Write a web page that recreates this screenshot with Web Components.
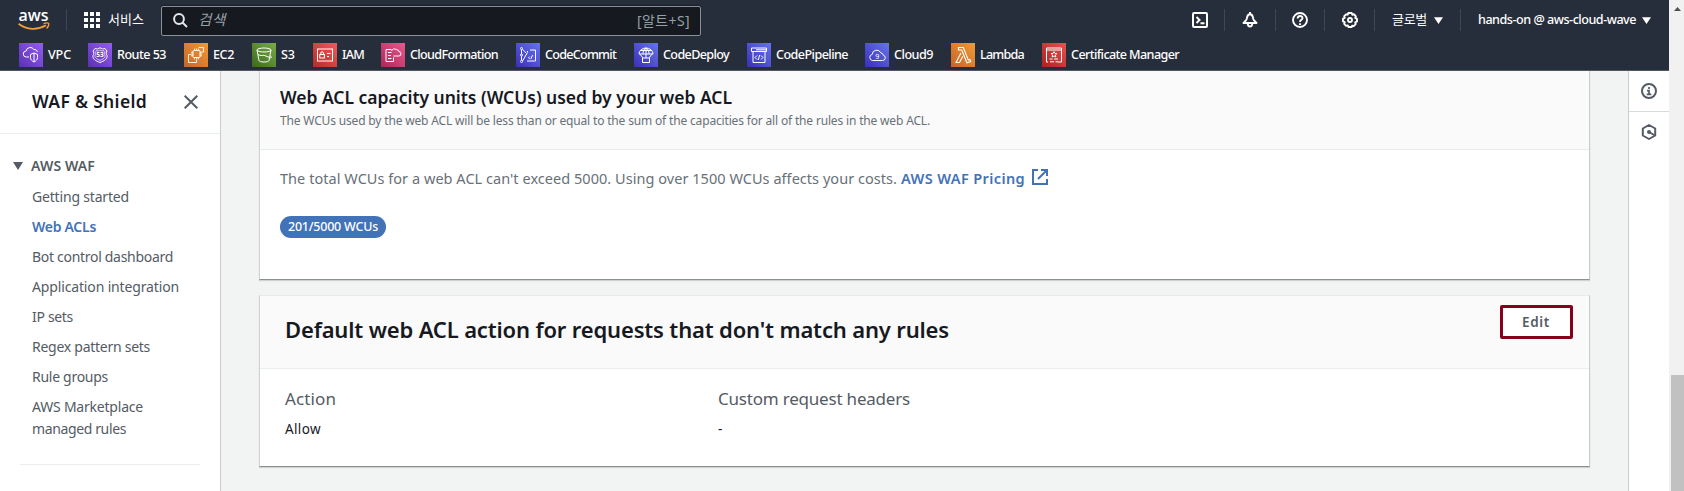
<!DOCTYPE html>
<html lang="ko">
<head>
<meta charset="utf-8">
<title>WAF &amp; Shield</title>
<style>
html,body{margin:0;height:100%;overflow:hidden}
body{font-family:"Noto Sans","Noto Sans CJK KR",sans-serif;color:#16191f}
</style>
</head>
<body>
<console-app></console-app>
<script>
const define=(name,html,setup)=>{
  const t=document.createElement('template');
  t.innerHTML=html;
  customElements.define(name,class extends HTMLElement{
    constructor(){super();this.attachShadow({mode:'open'}).append(t.content.cloneNode(true));}
    connectedCallback(){if(setup)setup(this,this.shadowRoot);}
  });
};

/* One line of text tracked to a set width. */
define('fit-text',`<style>:host{display:inline-block;white-space:nowrap;vertical-align:top;flex:none}span{display:inline-block;font-kerning:normal}</style><span><slot></slot></span>`,(el,r)=>{
  const w=+el.getAttribute('w'),s=r.querySelector('span');
  el.style.fontSize=(el.getAttribute('size')||14)+'px';
  el.style.lineHeight=(el.getAttribute('lh')||20)+'px';
  el.style.fontWeight=el.getAttribute('weight')||400;
  const n=[...el.textContent].length;
  s.style.letterSpacing=((w-s.getBoundingClientRect().width)/Math.max(1,n))+'px';
  el.style.width=w+'px';
});

const ICONS={
 vpc:['#5a30b5','#945df2','<path d="M10 14H7.5a3 3 0 0 1-.4-6 4.2 4.2 0 0 1 7.8-1.400 2.600 2.600 0 0 1 3.400 2.400M15 10l3.500 1.400v3.200c0 2-1.400 3.300-3.500 4.400-2.100-1.100-3.500-2.400-3.500-4.400v-3.200zM15 10v9"/>'],
 route:['#5a30b5','#945df2','<path d="M7 5.500c1.700.6 3.300.5 5-.8 1.700 1.300 3.300 1.400 5 .8l2 2.500c-.9 1.700-.9 2.900 0 4.500.7 3.500-2.500 5.300-7 7-4.500-1.700-7.700-3.500-7-7 .9-1.600.9-2.800 0-4.500z"/><path d="M8 7.700c1.500.4 2.800.2 4-.8 1.200 1 2.500 1.200 4 .8l1 1c-.5 1.300-.5 2.600 0 4 .4 2-1.800 3.300-5 4.700-3.200-1.400-5.400-2.700-5-4.700.5-1.400.5-2.700 0-4z" stroke-width=".7"/><text x="12" y="14.400" text-anchor="middle" font-size="6.500" font-weight="700" fill="#fff" stroke="none">53</text>'],
 ec2:['#c86427','#f09a36','<rect x="9" y="7.500" width="7" height="7" rx=".8"/><path d="M10.700 5.500v2m1.800-2v2m1.800-2v2m-3.600 7v2m1.800-2v2m1.800-2v2M7 9.200h2M7 11h2m-2 1.800h2m7-3.600h2M16 11h2m-2 1.800h2M7 11.500H4.500v8h8V17M15 5V4.500h4.500V9H18" stroke-width=".9"/>'],
 s3:['#3a691d','#7aac49','<ellipse cx="12" cy="7" rx="7" ry="2"/><path d="M5 7l2 10.500c.2 2 9.800 2 10 0L19 7M12 12.300l6.500 2.500c1 .3 1.600-.8-.3-2.100M6 11.500c2 1.300 4 1 6 .8"/>'],
 iam:['#b52b2a','#ef5c55','<rect x="4.500" y="6" width="15" height="12"/><rect x="6.800" y="11.500" width="4.600" height="3.500"/><path d="M7.800 11.500V10a1.300 1.300 0 0 1 2.600 0v1.500M14 10.500h3.500M14 13.500h2"/>'],
 cfn:['#b02558','#e7598d','<path d="M10.500 6.500H5v12h7.500v-4M7 9.500h3.500M7 12.500h3M7 15.500h3.500M12.500 13h5.200a2.200 2.200 0 0 0 .2-4.400 2.400 2.400 0 0 0-2.600-2 3 3 0 0 0-4.800 1.400"/>'],
 commit:['#3b2fb5','#6574f0','<circle cx="5.500" cy="5.500" r="1"/><circle cx="5.500" cy="12" r="1"/><circle cx="5.500" cy="18.500" r="1"/><path d="M5.500 6.500V11m0 2v4.500M6.500 6.200l4 4.300M6.500 18l5-8.500M11 8.500h1m2-1.500h5.500v11H11M13.800 13.500l-1.300 1.300 1.300 1.300m2.800-4-1.800 4"/>'],
 deploy:['#3b2fb5','#6574f0','<path d="M5 11a7 6 0 0 1 14 0zM12 5v6M9 11c0-3 .8-5 3-6 2.200 1 3 3 3 6M6.500 7.500h11M6 11.200l3 3.800m9-3.800L15 15M12 11v4M8.500 15h7v4.500h-7z"/>'],
 pipe:['#3b2fb5','#6574f0','<path d="M4.500 5h15v3.500h-15zM9 6.800h10M6 8.500v11h12v-11M10 12.500l-2 2 2 2m4-4 2 2-2 2m-1.300-4.500-1.500 5"/>'],
 c9:['#3b2fb5','#6574f0','<path d="M7.500 17.500a3.100 3.100 0 0 1-.3-6.100 4.500 4.500 0 0 1 8.600-1.600 3 3 0 0 1 2.500 2.400 2.700 2.700 0 0 1-.8 5.300z"/><text x="12.200" y="15.800" text-anchor="middle" font-size="7" fill="#fff" stroke="none">9</text>'],
 lambda:['#c86427','#f09a36','<path d="M7.500 4.500h4.800l5 12.500 1.500-.6.900 2.200-3.800 1.200L10.700 7H7.500zM10 10 5 19.500h3.500l3.300-6.300" stroke-width="1.100"/>'],
 cert:['#a82322','#e8524f','<path d="M4.500 5h15v14h-3.500M4.500 5v14H6M4.500 7h15M7.500 16h3m1.500 0h4M8 18.800h4m1.500 0H16"/><path d="M12 8.600l.9 1.800 2 .2-1.500 1.400.5 2-1.900-1-1.900 1 .5-2-1.500-1.400 2-.2z"/>']
};
let gid=0;
define('service-icon',`<style>:host{display:block;width:24px;height:24px;flex:none}svg{display:block}</style>`,(el,r)=>{
  const [a,b,p]=ICONS[el.getAttribute('name')],id='g'+gid++;
  const d=document.createElement('div');
  d.innerHTML=`<svg width="24" height="24" fill="none" stroke="#fff"><defs><linearGradient id="${id}" x1="0" y1="1" x2="1" y2="0"><stop stop-color="${a}"/><stop offset="1" stop-color="${b}"/></linearGradient></defs><rect width="24" height="24" fill="url(#${id})" stroke="none"/>${p}</svg>`;
  r.append(d);
});

customElements.define('service-item',class extends HTMLElement{
  constructor(){super();this.attachShadow({mode:'open'});}
  connectedCallback(){
    this.shadowRoot.innerHTML=`<style>:host{display:flex;gap:5px;color:#fff;height:24px;flex:none;box-sizing:border-box;width:${this.getAttribute('w')}px}</style><service-icon name="${this.getAttribute('icon')}"></service-icon><fit-text w="${this.getAttribute('tw')}" size="12.600" lh="24" weight="500">${this.getAttribute('label')}</fit-text>`;
  }
});

define('nav-sep',`<style>:host{display:block;width:1px;height:22px;background:#414750;flex:none}</style>`);
define('down-caret',`<style>:host{display:block;flex:none}svg{display:block}</style><svg width="9" height="7" fill="currentColor"><path d="M0 .3h9L4.500 7z"/></svg>`);

define('search-box',`<style>:host{display:flex;box-sizing:border-box;width:540px;height:30px;border:1px solid #879196;border-radius:2px;background:#16191f;color:#95a0a6;align-items:center;padding:0 10px 0 11px;box-shadow:0 -1px 1px #1b212b;flex:none;margin-top:2px}svg{margin:-1px 10px 0 0;display:block}.h{font-style:italic;flex:1;margin-top:-2px}</style>
<svg width="15" height="15" fill="none" stroke="#e4e7e9" stroke-width="2"><circle cx="6" cy="6" r="4.900"/><path d="M9.500 9.500 14 14"/></svg><div class="h"><fit-text w="28" size="14.500" lh="20">검색</fit-text></div><fit-text w="53" size="14" lh="20" style="margin-top:-1px">[알트+S]</fit-text>`);

define('top-nav',`<style>
:host{display:block;height:71px;box-sizing:border-box;background:#272e3b;border-bottom:1px solid #545664;color:#fff}
.r{display:flex;height:40px;align-items:center;width:1669px;box-sizing:border-box;padding-left:18px}
.f{display:flex;padding:3px 0 0 19px}
svg{display:block;flex:none}.push{margin-left:auto}
</style>
<div class="r">
<svg width="32" height="34"><text x="0.500" y="18" font-family="Open Sans,Noto Sans,sans-serif" font-weight="600" font-size="17" textLength="30" lengthAdjust="spacingAndGlyphs" fill="#fff">aws</text><path d="M.5 20.800c8.500 6.500 19 6.500 27.500 1.500" fill="none" stroke="#f19d38" stroke-width="1.900"/><path d="M25.500 20.700c2-.8 4.500-.9 5-.3.400.8-.3 3.300-1.900 5" fill="none" stroke="#f19d38" stroke-width="1.400"/></svg>
<nav-sep style="margin-left:16px"></nav-sep>
<svg width="16" height="16" fill="#fff" style="margin-left:17px"><path d="M0 0h4v4H0zM6 0h4v4H6zM12 0h4v4h-4zM0 6h4v4H0zM6 6h4v4H6zM12 6h4v4h-4zM0 12h4v4H0zM6 12h4v4H6zM12 12h4v4h-4z"/></svg>
<fit-text w="36" size="13" lh="20" style="margin:-3px 17px 0 8px">서비스</fit-text>
<search-box></search-box>
<svg class="push" width="16" height="16" fill="none" stroke="#fff" stroke-width="2"><rect x="1" y="1" width="14" height="14" rx="1"/><path d="M4.500 5l3 3-3 3M8.500 11.300h4"/></svg>
<nav-sep style="margin-left:16px"></nav-sep>
<svg style="margin-left:17px" width="16" height="16" fill="none" stroke="#fff" stroke-width="1.900" stroke-linejoin="round"><path d="M8 2.300C5 2.300 5.300 5 4.700 7c-.5 1.500-1.800 2.400-3.200 4h13c-1.400-1.600-2.700-2.500-3.200-4C10.700 5 11 2.300 8 2.300zM5.700 11.500c.2 4 4.400 4 4.600 0M8 0v2.500"/></svg>
<nav-sep style="margin-left:17px"></nav-sep>
<svg style="margin-left:16px" width="16" height="16" fill="none" stroke="#fff" stroke-width="1.900"><circle cx="8" cy="8" r="7"/><path d="M5.600 6.500C5.600 3 10.600 3.300 10.500 6.200 10.400 8 8 7.700 8 10M8 11.200v1.700"/></svg>
<nav-sep style="margin-left:16px"></nav-sep>
<svg style="margin-left:17px" width="16" height="16" fill="none" stroke="#fff" stroke-width="1.900" stroke-linejoin="round"><path d="M6.300 1h3.400l.6 1.700 1.800-.4 1.800 2.100-.7 1.500 1.800 1v2.500l-1.800 1 .5 1.700-2 2-1.500-.4L9.600 15H6.400l-.6-1.600-1.700.4-1.900-2 .5-1.600L1 9.400V6.700l1.700-.9-.5-1.600L4.100 2.300l1.600.4z"/><circle cx="8" cy="8" r="2"/></svg>
<nav-sep style="margin-left:16px"></nav-sep>
<fit-text w="35" size="13" lh="20" style="margin:-3px 7px 0 17px">글로벌</fit-text><down-caret></down-caret>
<nav-sep style="margin:0 17px"></nav-sep>
<fit-text w="158" size="12.600" lh="20" weight="500" style="margin-right:6px">hands-on @ aws-cloud-wave</fit-text><down-caret style="margin-right:18px"></down-caret>
</div>
<div class="f">
<service-item icon="vpc" label="VPC" tw="23" w="69"></service-item><service-item icon="route" label="Route 53" tw="49" w="96"></service-item><service-item icon="ec2" label="EC2" tw="21" w="68"></service-item><service-item icon="s3" label="S3" tw="14" w="61"></service-item><service-item icon="iam" label="IAM" tw="22" w="68"></service-item><service-item icon="cfn" label="CloudFormation" tw="88" w="135"></service-item><service-item icon="commit" label="CodeCommit" tw="71" w="118"></service-item><service-item icon="deploy" label="CodeDeploy" tw="66" w="113"></service-item><service-item icon="pipe" label="CodePipeline" tw="72" w="118"></service-item><service-item icon="c9" label="Cloud9" tw="39" w="86"></service-item><service-item icon="lambda" label="Lambda" tw="44" w="91"></service-item><service-item icon="cert" label="Certificate Manager" tw="108" w="140"></service-item>
</div>`);

define('side-nav',`<style>
:host{display:block;width:220px;flex:none;background:#fff;border-right:1px solid #ccc;color:#545b64;box-sizing:content-box}
header{display:flex;align-items:flex-start;border-bottom:1px solid #eaeded;box-sizing:border-box;height:63px;padding:17px 0 0 32px;color:#16191f}
header svg{margin:7px 0 0 37px}
.g{display:flex;align-items:center;padding:22px 0 0 13px;height:20px}.g fit-text{margin-left:8px}
ul{list-style:none;margin:0;padding:10px 0 0 32px}li{height:30px;line-height:22px}li.on{color:#4272b8}li.two{height:52px}li fit-text{display:block}
hr{border:0;height:1px;background:#eaeded;margin:16px 20px 0}
</style>
<header><fit-text w="115" size="17.500" lh="26" weight="600">WAF &amp; Shield</fit-text><svg width="14" height="14" fill="none" stroke="#545b64" stroke-width="2"><path d="M.7.700l12.600 12.600M13.300.7.700 13.300"/></svg></header>
<div class="g"><svg width="10" height="8" fill="#545b64"><path d="M0 0h10L5 8z"/></svg><fit-text w="64" size="14" weight="600">AWS WAF</fit-text></div>
<ul><li><fit-text w="97" lh="22">Getting started</fit-text></li><li class="on"><fit-text w="64" lh="22" weight="600">Web ACLs</fit-text></li><li><fit-text w="141" lh="22">Bot control dashboard</fit-text></li><li><fit-text w="147" lh="22">Application integration</fit-text></li><li><fit-text w="41" lh="22">IP sets</fit-text></li><li><fit-text w="118" lh="22">Regex pattern sets</fit-text></li><li><fit-text w="76" lh="22">Rule groups</fit-text></li><li class="two"><fit-text w="111" lh="22">AWS Marketplace</fit-text><fit-text w="94" lh="22">managed rules</fit-text></li></ul><hr>`);

define('info-card',`<style>
:host{display:block;box-sizing:border-box;background:#fff;border-left:1px solid #d0d4d5;border-right:1px solid #c8cccd;border-bottom:1px solid #8b9093;box-shadow:0 1px 1px #cfd2d3}
.head{background:#fafafa;border-bottom:1px solid #eaeded;box-sizing:border-box;display:flex;justify-content:space-between}
</style><div class="head"><slot name="head"></slot></div><slot></slot>`,(el,r)=>{r.querySelector('.head').style.height=el.getAttribute('head')+'px';});

define('status-badge',`<style>:host{display:block;box-sizing:border-box;width:106px;height:22px;border-radius:11px;background:#4272b8;color:#fff;padding-left:8px}</style><slot></slot>`);
define('edit-button',`<style>:host{display:block;box-sizing:border-box;width:73px;height:34px;border:3px solid #870019;border-radius:2px;background:#fff;color:#545b64;padding:4px 0 0 19px}</style><slot></slot>`);

define('main-pane',`<style>
:host{display:block;flex:1;min-width:0;background:#f2f3f3;padding:0 38px;color:#16191f}
.t{padding:7px 0 0 20px}.t fit-text,.c fit-text{display:block}.d{color:#687078}
.p{display:flex;padding:17px 0 0 20px;height:46px;color:#687078}.p a{color:#4272b8;display:flex;margin-left:4px}.p svg{margin:2px 0 0 7px}
status-badge{margin:3px 0 0 20px}
.h{padding:16px 0 0 25px}edit-button{margin:9px 16px 0 0}
.cols{display:flex;padding:17px 0 0 25px}.c{width:433px}.c fit-text:first-child{color:#545b64}.c fit-text+fit-text{margin-top:7px}
</style>
<info-card head="79" style="height:209px">
<div slot="head" class="t"><fit-text w="452" size="17.500" lh="38" weight="600">Web ACL capacity units (WCUs) used by your web ACL</fit-text><fit-text class="d" w="650" size="12" lh="20" style="margin-top:-5px">The WCUs used by the web ACL will be less than or equal to the sum of the capacities for all of the rules in the web ACL.</fit-text></div>
<div class="p"><fit-text w="617" size="14.500" lh="22">The total WCUs for a web ACL can't exceed 5000. Using over 1500 WCUs affects your costs.</fit-text><a><fit-text w="124" size="14.500" lh="22" weight="600">AWS WAF Pricing</fit-text><svg width="16" height="16" fill="none" stroke="#4272b8" stroke-width="2"><path d="M6 1H1v14h14v-5M9 1h6v6M15 1 6 10"/></svg></a></div>
<status-badge><fit-text w="90" size="12.500" lh="22" weight="500">201/5000 WCUs</fit-text></status-badge>
</info-card>
<info-card head="73" style="height:172px;margin-top:15px;border-top:1px solid #e9ebeb">
<div slot="head" class="h"><fit-text w="664" size="22" lh="34" weight="600">Default web ACL action for requests that don't match any rules</fit-text></div>
<edit-button slot="head"><fit-text w="28" size="13.500" lh="20" weight="600">Edit</fit-text></edit-button>
<div class="cols"><div class="c"><fit-text w="51" size="17" lh="26">Action</fit-text><fit-text w="36" size="13.500">Allow</fit-text></div><div class="c"><fit-text w="192" size="17" lh="26">Custom request headers</fit-text><fit-text w="5" size="13.500">-</fit-text></div></div>
</info-card>`);

define('tool-rail',`<style>:host{display:block;width:40px;flex:none;background:#fff;border-left:1px solid #ccc}div{height:40px;display:flex;align-items:center;justify-content:center}div:first-of-type{border-bottom:1px solid #d5dbdb}svg{display:block}</style>
<div><svg width="16" height="16" fill="none" stroke="#545b64" stroke-width="2"><circle cx="8" cy="8" r="7"/><path d="M8 4v2M6 7.700h2V12M5.700 11.300h4.600" stroke-width="1.700"/></svg></div>
<div><svg width="16" height="16" fill="none" stroke="#545b64" stroke-width="2" stroke-linejoin="round"><path d="M8 1l6.200 3.500v7L8 15l-6.200-3.500v-7z"/><path d="M8 8l6 3.500"/><circle cx="8" cy="8" r="2" fill="#545b64" stroke="none"/></svg></div>`);

define('scroll-track',`<style>:host{display:flex;flex-direction:column;width:15px;flex:none;background:#f1f1f1}svg{display:block;margin:7px 0 0 5px}i{display:block;background:#c1c1c1;margin:364px 0 0 2px;flex:1}</style><svg width="7" height="4" fill="#505050"><path d="M3.500 0 7 4H0z"/></svg><i></i>`);

define('console-app',`<style>:host{display:flex;width:1684px;height:491px;overflow:hidden}.col{width:1669px;display:flex;flex-direction:column}.row{display:flex;flex:1;min-height:0}</style>
<div class="col"><top-nav></top-nav><div class="row"><side-nav></side-nav><main-pane></main-pane><tool-rail></tool-rail></div></div><scroll-track></scroll-track>`);
</script>
</body>
</html>
